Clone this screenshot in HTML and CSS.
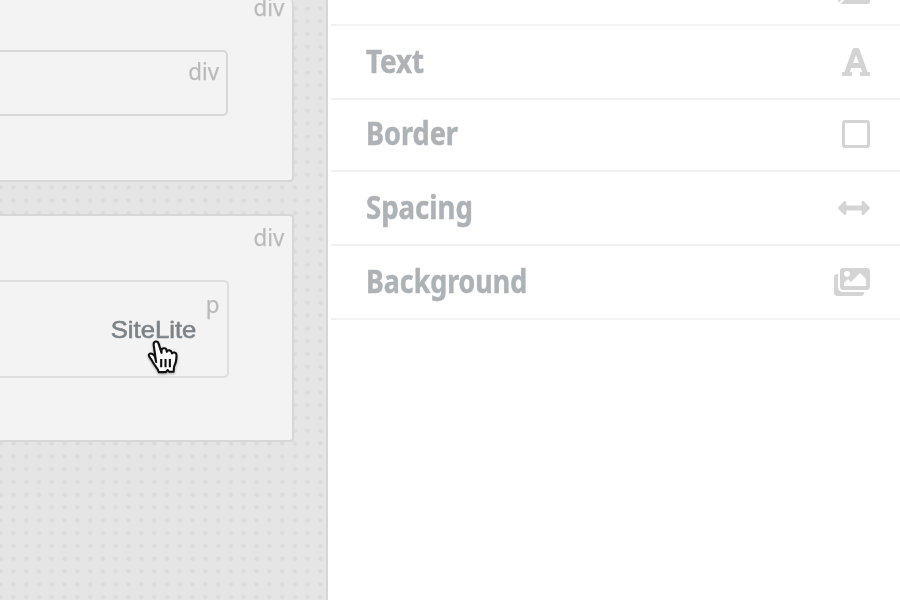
FILE: index.html
```html
<!DOCTYPE html>
<html lang="en">
<head>
<meta charset="utf-8">
<title>SiteLite</title>
<link rel="stylesheet" href="styles.css">
</head>
<body>
<div class="app">
  <main class="canvas">
    <section class="block block-first">
      <span class="tag">div</span>
      <div class="inner inner-first"><span class="tag">div</span></div>
    </section>
    <section class="block block-second">
      <span class="tag">div</span>
      <div class="inner inner-second"><span class="tag">p</span><p class="site-name">SiteLite</p></div>
    </section>
  </main>
  <aside class="panel">
    <div class="row row-cut">
      <svg class="icon" width="32" height="5" viewBox="0 0 32 5"><path d="M0 0h3.500L1 2.500C.4 2 0 1.300 0 .6zM6.500 0H32v1a3 3 0 0 1-3 3H2.500z"/></svg>
    </div>
    <div class="row"><span class="label text">Text</span>
      <svg class="icon" width="28" height="32" viewBox="0 0 448 512"><path d="M432 416h-23.41L277.53 53.69A32 32 0 0 0 247.58 32h-47.16a32 32 0 0 0-29.95 21.69L39.41 416H16a16 16 0 0 0-16 16v32a16 16 0 0 0 16 16h128a16 16 0 0 0 16-16v-32a16 16 0 0 0-16-16h-19.58l23.3-64h152.56l23.3 64H304a16 16 0 0 0-16 16v32a16 16 0 0 0 16 16h128a16 16 0 0 0 16-16v-32a16 16 0 0 0-16-16zM176.85 272L224 142.51 271.15 272z"/></svg>
    </div>
    <div class="row row-short"><span class="label border">Border</span>
      <svg class="icon outline" width="28" height="28" viewBox="0 0 28 28"><rect x="1.5" y="1.5" width="25" height="25" rx="1.5"/></svg>
    </div>
    <div class="row"><span class="label spacing">Spacing</span>
      <svg class="icon" width="32" height="32" viewBox="0 0 512 512"><path d="M377.941 169.941V216H134.059v-46.059c0-21.382-25.851-32.09-40.971-16.971L7.029 239.029c-9.373 9.373-9.373 24.568 0 33.941l86.059 86.059c15.119 15.119 40.971 4.411 40.971-16.971V296h243.882v46.059c0 21.382 25.851 32.09 40.971 16.971l86.059-86.059c9.373-9.373 9.373-24.568 0-33.941l-86.059-86.059c-15.119-15.12-40.971-4.412-40.971 16.97z"/></svg>
    </div>
    <div class="row"><span class="label background">Background</span>
      <svg class="icon" width="36" height="32" viewBox="0 0 576 512"><path d="M480 416v16c0 26.51-21.49 48-48 48H48c-26.51 0-48-21.49-48-48V176c0-26.51 21.49-48 48-48h16v208c0 44.112 35.888 80 80 80h336zm96-80V80c0-26.51-21.49-48-48-48H144c-26.51 0-48 21.49-48 48v256c0 26.51 21.49 48 48 48h384c26.51 0 48-21.49 48-48zM256 128c0 26.51-21.49 48-48 48s-48-21.49-48-48 21.49-48 48-48 48 21.49 48 48zm-96 144l55.515-55.515c4.686-4.686 12.284-4.686 16.971 0L272 256l135.515-135.515c4.686-4.686 12.284-4.686 16.971 0L512 208v112H160v-48z"/></svg>
    </div>
  </aside>
  <svg class="cursor" width="38" height="39" viewBox="0 0 36 38" preserveAspectRatio="none"><path d="M11.5 22.5L9.2 6C8.7 2 13 1 14 5l2.6 8.500V11c.5-3 4.500-2.500 4.700 0l.3 1.500c1-2.200 4.200-1.800 4.600.6l.3 1c1-1.800 4.300-1 4.300 1.600 0 4-.3 7.600-2.300 11l-.5 5.300h-4l-1.500-1.700-2 2h-6.500c-.5-4-4-6-6-10.500-1-2.400-4-4.600-3.300-6.500 1-2.400 4.300-.5 5.500 1.500z"/><path d="M16.300 19.500v8M20.400 19.500v8M24.500 19.500v8"/></svg>
</div>
</body>
</html>
```
FILE: styles.css
```css
* { box-sizing: border-box; }
body { margin: 0; font-family: "Noto Sans", sans-serif; background: #fff; }
.app { position: relative; display: flex; width: 900px; height: 600px; overflow: hidden; }
.canvas {
  width: 328px;
  flex: none;
  border-right: 2px solid #d6d6d6;
  background: radial-gradient(circle at center, #dbdbdb 1.8px, transparent 2.6px) -5.8px 2px / 12.8px 12.8px #e5e5e5;
}
.block {
  width: 294px;
  background: #f3f3f3;
  border: solid #d7d7d7;
  border-width: 2px 2px 2px 0;
  border-radius: 0 4px 4px 0;
}
.block-first { height: 182px; border-top: 0; }
.block-second { height: 228px; margin-top: 32px; }
.tag {
  display: block;
  text-align: right;
  font-size: 23px;
  line-height: 28px;
  color: #bababa;
  -webkit-text-stroke: .25px #bababa;
  transform: scaleX(.97);
  transform-origin: right;
}
.block > .tag { padding-right: 8px; }
.block-first > .tag { height: 50px; line-height: 15px; }
.block-second > .tag { height: 64px; padding-top: 7px; }
.inner {
  border: solid #d7d7d7;
  border-width: 2px 2px 2px 0;
  border-radius: 0 5px 5px 0;
  padding-right: 7px;
}
.inner-first { width: 228px; height: 66px; padding-top: 5px; }
.inner-second { width: 229.4px; height: 98px; padding: 8px 8px 0 0; border-color: #dedede; }
.site-name {
  margin: 0 23px 0 0;
  text-align: right;
  font: 24px/24px "Liberation Sans", sans-serif;
  color: #7c8286;
  -webkit-text-stroke: .6px #7c8286;
  transform: scaleX(1.07);
  transform-origin: right;
}
.panel { flex: 1; padding-left: 3px; }
.row {
  display: flex;
  align-items: center;
  justify-content: space-between;
  height: 74px;
  padding: 0 30px 0 35px;
  border-bottom: 2px solid #f1f1f1;
}
.row-cut { height: 26px; align-items: flex-start; justify-content: flex-end; }
.row-short { height: 72px; padding-bottom: 2px; }
.label {
  margin-bottom: 3px;
  font-size: 31.5px;
  font-weight: 700;
  line-height: 40px;
  color: #adb2b6;
  -webkit-text-stroke: .5px #adb2b6;
  transform-origin: left;
}
.text { transform: scaleX(.88); }
.border { transform: scaleX(.86); }
.spacing { transform: scaleX(.875); }
.background { transform: scaleX(.85); }
.icon { fill: #d4d4d4; }
.outline { fill: none; stroke: #d4d4d4; stroke-width: 3; }
.cursor {
  position: absolute;
  left: 144px;
  top: 339px;
  fill: #fff;
  stroke: #111;
  stroke-width: 2;
  stroke-linejoin: round;
  filter: drop-shadow(0 1px 1px rgba(0, 0, 0, .35));
}
```
